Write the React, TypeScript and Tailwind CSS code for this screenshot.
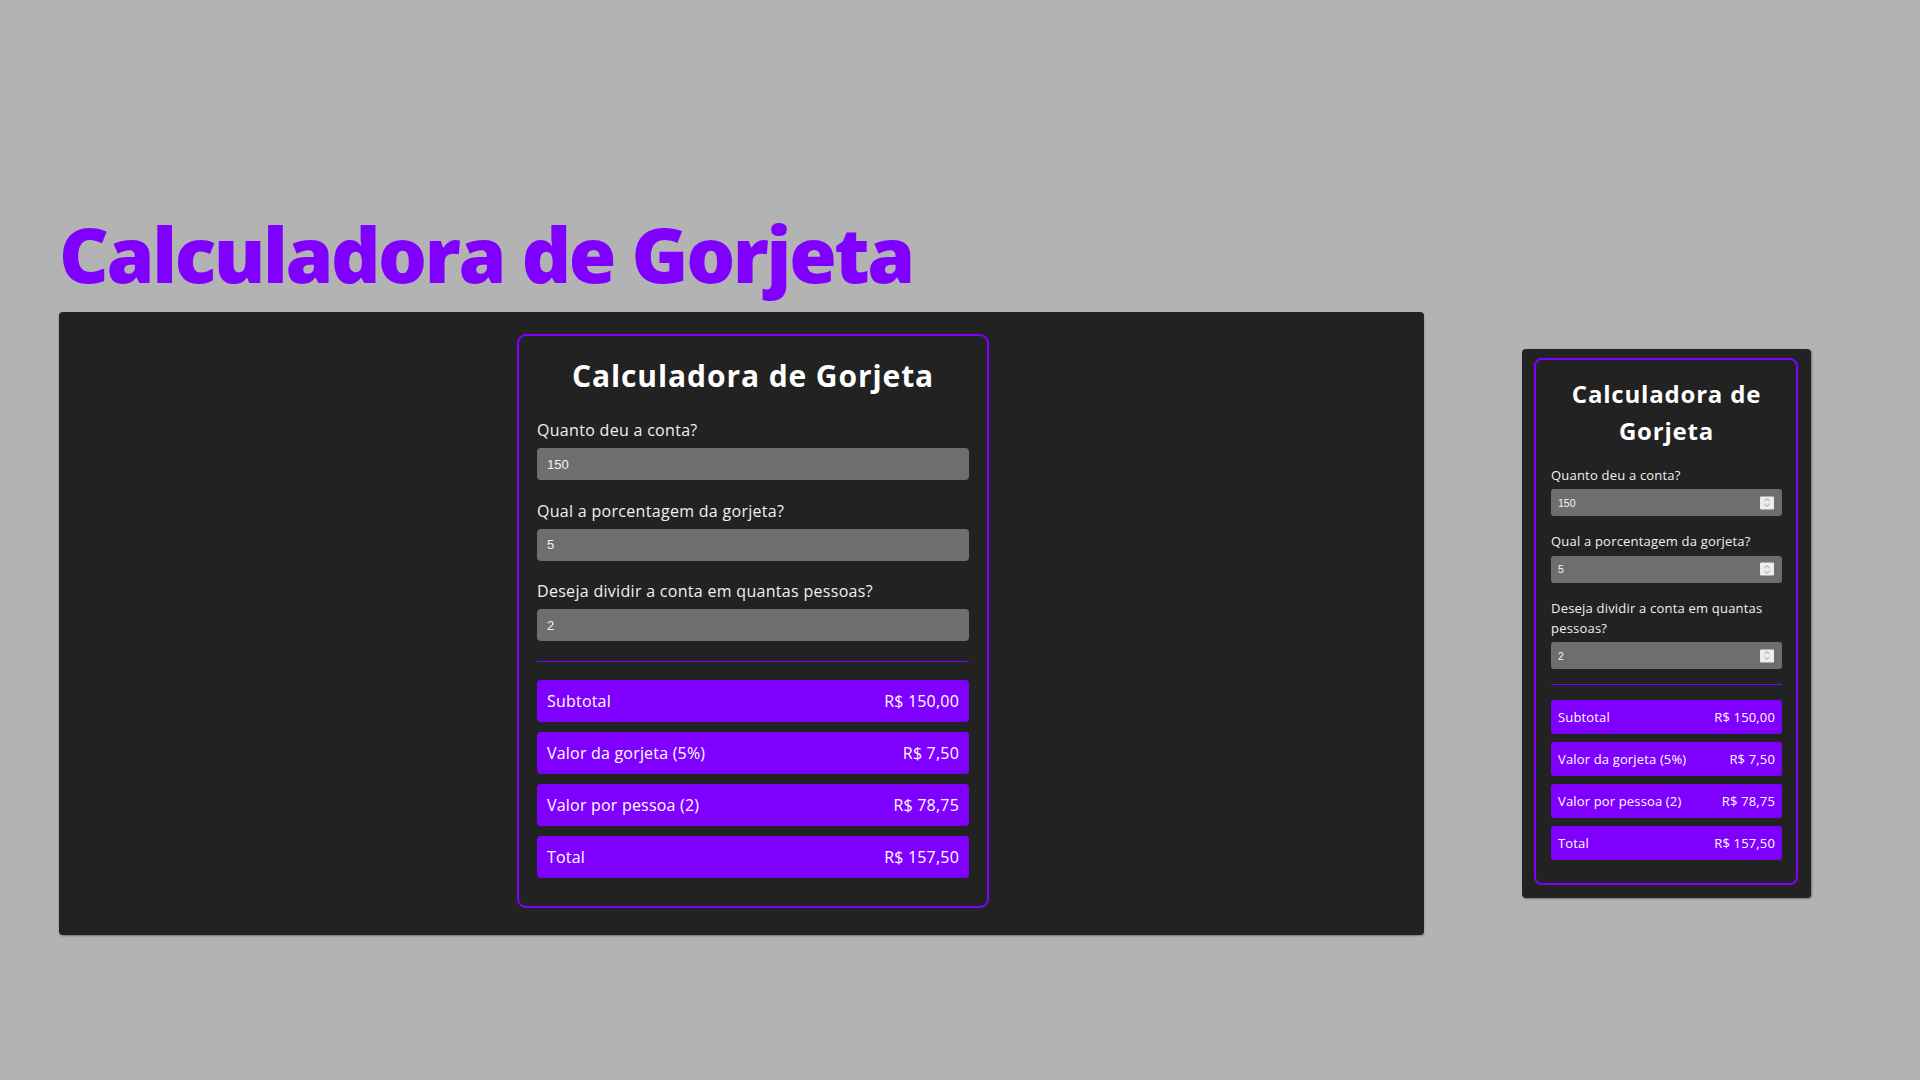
import React from "react";

function Spinner() {
  return (
    <div className="absolute right-[8px] top-1/2 -translate-y-1/2 w-[14px] h-[13px] bg-[#ececec] rounded-[1px] flex items-center justify-center">
      <svg width="8" height="10" viewBox="0 0 8 10" fill="none" stroke="#9a9a9a" strokeWidth="1">
        <path d="M1.5 3.5 L4 1.2 L6.5 3.5" />
        <path d="M1.5 6.5 L4 8.8 L6.5 6.5" />
      </svg>
    </div>
  );
}

const rows = [
  ["Subtotal", "R$ 150,00"],
  ["Valor da gorjeta (5%)", "R$ 7,50"],
  ["Valor por pessoa (2)", "R$ 78,75"],
  ["Total", "R$ 157,50"],
];

const fields = [
  ["Quanto deu a conta?", "150"],
  ["Qual a porcentagem da gorjeta?", "5"],
  ["Deseja dividir a conta em quantas pessoas?", "2"],
];

function BigCard() {
  return (
    <div className="w-[472px] border-2 border-[#8000ff] rounded-[9px] pt-[16px] pb-[28px] px-[18px] font-['Open_Sans',sans-serif]">
      <h2 className="text-center text-white font-bold text-[30px] leading-[48px] tracking-[0.9px]">
        Calculadora de Gorjeta
      </h2>
      <div className="mt-[18px] flex flex-col gap-[18.5px]">
        {fields.map(([label, value]) => (
          <div key={label} className="flex flex-col">
            <label className="text-[16px] leading-[24px] text-[#f0f0f0] mb-[6px] tracking-[0.3px]">{label}</label>
            <input
              readOnly
              type="text"
              value={value}
              className="h-[32px] w-full rounded-[4px] bg-[#6e6e6e] px-[10px] text-[13px] text-[#f4f4f4] font-['Liberation_Sans',Arial,sans-serif] outline-none border-0"
            />
          </div>
        ))}
      </div>
      <div className="mt-[19.5px] h-[1.5px] bg-[#8000ff]" />
      <div className="mt-[18px] flex flex-col gap-[10px]">
        {rows.map(([l, r]) => (
          <div key={l} className="h-[42px] rounded-[4px] bg-[#8000ff] px-[10px] flex items-center justify-between text-white text-[16px] tracking-[0.2px]">
            <span>{l}</span>
            <span>{r}</span>
          </div>
        ))}
      </div>
    </div>
  );
}

function SmallCard() {
  return (
    <div className="w-[264px] border-2 border-[#8000ff] rounded-[8px] pt-[15px] pb-[23px] pl-[15px] pr-[14px] font-['Open_Sans',sans-serif]">
      <h2 className="text-center text-white font-bold text-[24px] leading-[37px] tracking-[0.8px]">
        Calculadora de Gorjeta
      </h2>
      <div className="mt-[16px] flex flex-col gap-[15px]">
        {fields.map(([label, value]) => (
          <div key={label} className="flex flex-col">
            <label className="text-[13px] leading-[20px] text-[#f0f0f0] mb-[4px] tracking-[0.2px]">{label}</label>
            <div className="relative">
              <input
                readOnly
                type="text"
                value={value}
                className="h-[27px] w-full rounded-[3px] bg-[#6e6e6e] px-[7px] text-[10.5px] text-[#f4f4f4] font-['Liberation_Sans',Arial,sans-serif] outline-none border-0"
              />
              <Spinner />
            </div>
          </div>
        ))}
      </div>
      <div className="mt-[15px] h-px bg-[#8000ff]" />
      <div className="mt-[15px] flex flex-col gap-[8px]">
        {rows.map(([l, r]) => (
          <div key={l} className="h-[34px] rounded-[3px] bg-[#8000ff] px-[7px] flex items-center justify-between text-white text-[13px] tracking-[0.15px]">
            <span>{l}</span>
            <span>{r}</span>
          </div>
        ))}
      </div>
    </div>
  );
}

export default function App() {
  return (
    <div className="min-h-screen w-full bg-[#b3b3b3] pt-[215px] pl-[59px]">
      <h1 className="h-[78px] leading-none text-[77px] font-extrabold text-[#8000ff] font-['Open_Sans',sans-serif] tracking-[-2.4px] mb-[19px] whitespace-nowrap">
        Calculadora de Gorjeta
      </h1>
      <div className="flex items-center">
        <div className="w-[1365px] h-[623px] bg-[#222222] rounded-[4px] shadow-[0_1px_2px_rgba(0,0,0,0.35)] pt-[22px] pl-[458px]">
          <BigCard />
        </div>
        <div className="ml-[98px] w-[289px] bg-[#222222] rounded-[4px] shadow-[1px_1px_2px_rgba(0,0,0,0.35)] pt-[9px] pb-[13px] pl-[12px]">
          <SmallCard />
        </div>
      </div>
    </div>
  );
}
